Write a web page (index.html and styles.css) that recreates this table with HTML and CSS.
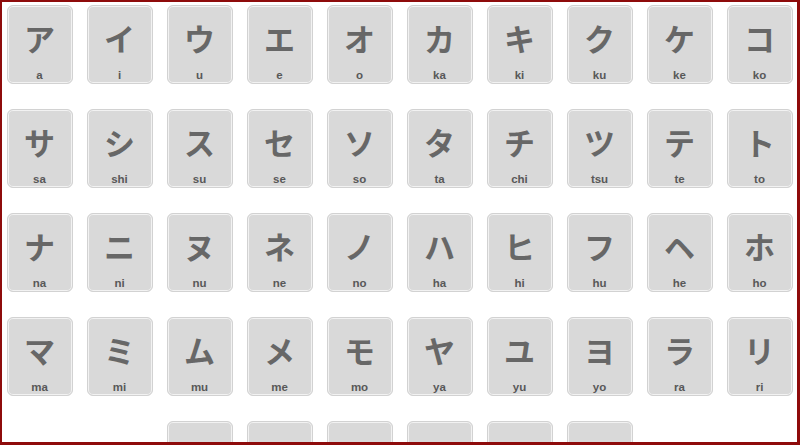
FILE: index.html
```html
<!DOCTYPE html>
<html lang="ja">
<head>
    <meta charset="UTF-8">
    <meta name="viewport" content="width=device-width, initial-scale=1.0">
    <title>Katakana Chart</title>
    <link rel="stylesheet" href="styles.css">
</head>
<body>
    <div class="frame">
        <div class="kana-grid" id="grid"></div>
    </div>

    <script>
        const kana = [
            ['ア', 'a'], ['イ', 'i'], ['ウ', 'u'], ['エ', 'e'], ['オ', 'o'],
            ['カ', 'ka'], ['キ', 'ki'], ['ク', 'ku'], ['ケ', 'ke'], ['コ', 'ko'],
            ['サ', 'sa'], ['シ', 'shi'], ['ス', 'su'], ['セ', 'se'], ['ソ', 'so'],
            ['タ', 'ta'], ['チ', 'chi'], ['ツ', 'tsu'], ['テ', 'te'], ['ト', 'to'],
            ['ナ', 'na'], ['ニ', 'ni'], ['ヌ', 'nu'], ['ネ', 'ne'], ['ノ', 'no'],
            ['ハ', 'ha'], ['ヒ', 'hi'], ['フ', 'hu'], ['ヘ', 'he'], ['ホ', 'ho'],
            ['マ', 'ma'], ['ミ', 'mi'], ['ム', 'mu'], ['メ', 'me'], ['モ', 'mo'],
            ['ヤ', 'ya'], ['ユ', 'yu'], ['ヨ', 'yo'], ['ラ', 'ra'], ['リ', 'ri'],
            ['ル', 'ru'], ['レ', 're'], ['ロ', 'ro'], ['ワ', 'wa'], ['ヲ', 'wo'], ['ン', 'n']
        ];

        const grid = document.getElementById('grid');
        kana.forEach(([char, romaji]) => {
            const card = document.createElement('div');
            card.className = 'kana-card';
            card.innerHTML = '<span class="kana-char">' + char + '</span>' +
                '<span class="kana-romaji">' + romaji + '</span>';
            grid.appendChild(card);
        });
    </script>
</body>
</html>
```

FILE: styles.css
```css
* {
    box-sizing: border-box;
    margin: 0;
    padding: 0;
}

html, body {
    width: 800px;
    height: 445px;
    overflow: hidden;
    background: #ffffff;
}

.frame {
    width: 800px;
    height: 445px;
    border: 2px solid #8e0b0b;
    border-right-width: 3px;
    border-bottom-width: 3px;
    padding-top: 3px;
    overflow: hidden;
}

.kana-grid {
    display: flex;
    flex-wrap: wrap;
    justify-content: center;
    column-gap: 14px;
    row-gap: 25px;
}

.kana-card {
    width: 66px;
    height: 79px;
    background: #d9d9d9;
    border: 1px solid #d2d2d2;
    border-radius: 6px;
    box-shadow: inset 0 0 0 1px #f2f2f2;
    display: flex;
    flex-direction: column;
    align-items: center;
}

.kana-char {
    margin-top: 12px;
    font-family: "Noto Sans CJK JP", sans-serif;
    font-weight: 700;
    font-size: 31px;
    line-height: 40px;
    color: #676767;
}

.kana-romaji {
    margin-top: 10px;
    font-family: "Liberation Sans", Arial, sans-serif;
    font-weight: 700;
    font-size: 11.5px;
    line-height: 14px;
    color: #585858;
}
```
